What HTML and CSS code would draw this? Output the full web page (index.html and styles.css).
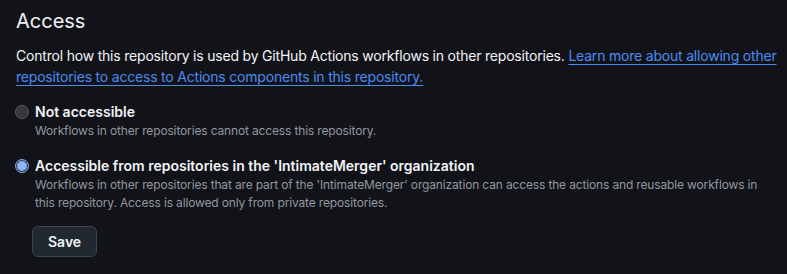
FILE: index.html
```html
<!DOCTYPE html>
<html lang="en">
<head>
	<meta charset="UTF-8">
	<title>Access</title>
	<link rel="stylesheet" href="styles.css">
</head>
<body>
<div class="section">
	<h2 class="section-title">Access</h2>
	<p class="section-note">
		Control how this repository is used by GitHub Actions workflows in other repositories.
		<a href="#">Learn more about allowing other repositories to access to Actions components in this repository.</a>
	</p>
	<form class="access-form">
		<label class="option">
			<span class="radio"></span>
			<span class="option-body">
				<span class="option-title">Not accessible</span>
				<span class="option-note">Workflows in other repositories cannot access this repository.</span>
			</span>
		</label>
		<label class="option">
			<span class="radio checked"></span>
			<span class="option-body">
				<span class="option-title">Accessible from repositories in the 'IntimateMerger' organization</span>
				<span class="option-note">Workflows in other repositories that are part of the 'IntimateMerger' organization can access the actions and reusable workflows in this repository. Access is allowed only from private repositories.</span>
			</span>
		</label>
		<div class="actions">
			<button type="button" class="btn">Save</button>
		</div>
	</form>
</div>
</body>
</html>
```

FILE: styles.css
```css
body {
	background: #121318;
	color: #f0f3f6;
	font-family: Inter, "Noto Sans", sans-serif;
	font-size: 14px;
	margin: 0;
	padding: 8px 10px 0 16px;
}

.section-title {
	font-size: 20px;
	font-weight: 400;
	line-height: 26px;
	margin: 0 0 11px;
}

.section-note {
	letter-spacing: -0.2px;
	line-height: 21px;
	margin: 0 0 15px;
}

.section-note a {
	color: #4a8cf2;
	text-decoration: underline;
	text-underline-offset: 3px;
}

.option {
	display: flex;
	gap: 6px;
	margin-bottom: 16px;
}

.radio {
	width: 14px;
	height: 14px;
	border-radius: 50%;
	box-sizing: border-box;
	background: #38383a;
	border: 1px solid #5a5a5d;
	margin: 3px 0 0 -1px;
	flex: none;
}

.radio.checked {
	background: #8db4fb;
	border: 1px solid #7f9ed9;
	box-shadow: inset 0 0 0 1px #1f2330;
}

.option-body {
	display: flex;
	flex-direction: column;
}

.option-title {
	font-weight: 600;
	line-height: 20px;
}

.option-note {
	color: #9198a1;
	font-size: 12px;
	letter-spacing: -0.15px;
	line-height: 18px;
}

.actions {
	padding-left: 16px;
}

.btn {
	background: #212830;
	border: 1px solid #3d444d;
	border-radius: 6px;
	color: #f0f3f6;
	font: 600 14px Inter, sans-serif;
	height: 31px;
	margin-top: -2px;
	padding: 0 15px;
}
```
